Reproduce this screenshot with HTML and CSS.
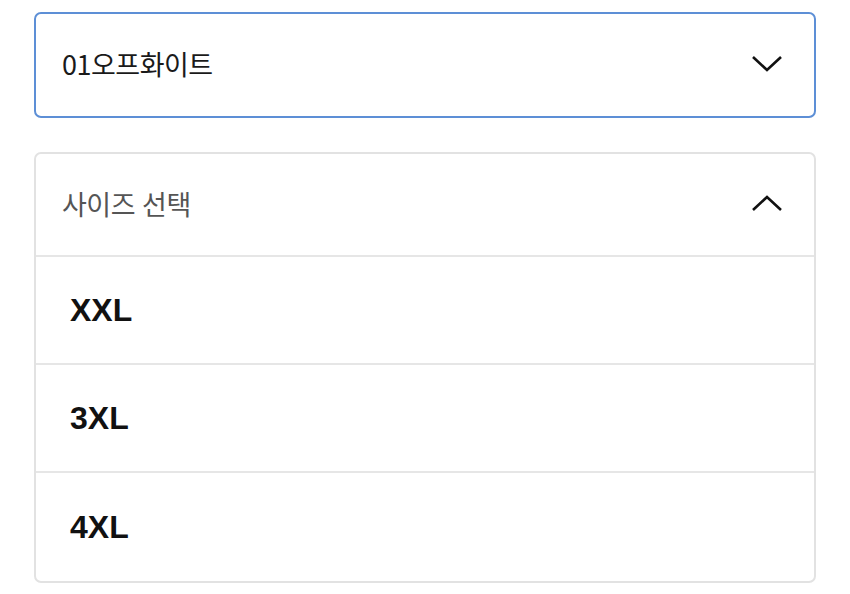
FILE: index.html
```html
<!DOCTYPE html>
<html lang="ko">

<head>
  <meta charset="UTF-8">
  <meta name="viewport" content="width=device-width, initial-scale=1.0">
  <title>옵션 선택</title>
  <link rel="stylesheet" href="styles.css">
</head>

<body>
  <div class="options">
    <div class="select selected">
      <span class="select-label">01오프화이트</span>
      <svg class="chevron" width="32" height="20" viewBox="0 0 32 20">
        <path d="M2 4 L16 17 L30 4" fill="none" stroke="#111" stroke-width="2.6" />
      </svg>
    </div>

    <div class="dropdown">
      <div class="dropdown-head">
        <span class="placeholder">사이즈 선택</span>
        <svg class="chevron" width="32" height="20" viewBox="0 0 32 20">
          <path d="M2 17 L16 4 L30 17" fill="none" stroke="#111" stroke-width="2.6" />
        </svg>
      </div>
      <ul class="size-list">
        <li class="size-item">XXL</li>
        <li class="size-item">3XL</li>
        <li class="size-item">4XL</li>
      </ul>
    </div>
  </div>
</body>

</html>
```

FILE: styles.css
```css
* {
  margin: 0;
  padding: 0;
  box-sizing: border-box;
}

body {
  font-family: "Noto Sans CJK KR", "Noto Sans", sans-serif;
  background-color: #fff;
  color: #111;
}

.options {
  width: 782px;
  margin-left: 34px;
  padding-top: 12px;
}

.select {
  display: flex;
  align-items: center;
  justify-content: space-between;
  height: 106px;
  padding: 0 31px 4px 26px;
  border: 2px solid #5d8fd6;
  border-radius: 7px;
}

.select-label {
  font-size: 27px;
  color: #1a1a1a;
  letter-spacing: -0.5px;
}

.dropdown {
  margin-top: 34px;
  border: 2px solid #e2e2e2;
  border-radius: 7px;
  overflow: hidden;
}

.dropdown-head {
  display: flex;
  align-items: center;
  justify-content: space-between;
  height: 103px;
  padding: 0 31px 3px 26px;
  border-bottom: 2px solid #e6e6e6;
}

.placeholder {
  font-size: 27px;
  color: #555;
  letter-spacing: -0.5px;
}

.size-list {
  list-style: none;
}

.size-item {
  display: flex;
  align-items: center;
  height: 108px;
  padding-left: 34px;
  font-family: "Liberation Sans", "Noto Sans", sans-serif;
  font-size: 32px;
  font-weight: 700;
  color: #111;
  border-bottom: 2px solid #e6e6e6;
}

.size-item:last-child {
  border-bottom: none;
}
```
